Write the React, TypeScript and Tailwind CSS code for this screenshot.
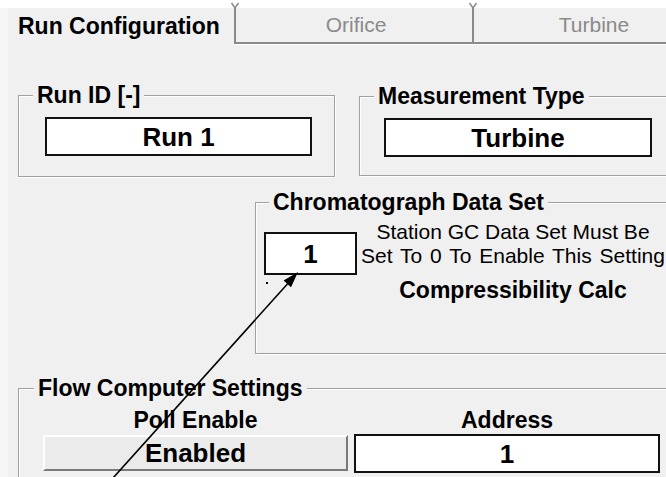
import React from "react";

const SANS = "font-['Liberation_Sans',Arial,sans-serif]";

// groupbox frame: grey line with a white highlight (etched look)
const GROUP =
  "border border-[#a0a0a0] shadow-[inset_1px_1px_0_#ffffff,1px_1px_0_#ffffff] box-border";
const LEGEND = "px-[4px] bg-[#f0f0f0] text-[23px] leading-[20px] font-bold text-black whitespace-nowrap";
const VALUE_BOX =
  "flex items-center justify-center bg-white border-2 border-[#111] text-[26px] font-bold leading-none text-black";

function TabEdge({ first = false }: { first?: boolean }) {
  return (
    <svg width="10" height="45" className="block shrink-0">
      <path d="M1.5 3 L5 8 L8.5 3" stroke="#8a8a8a" strokeWidth="1.5" fill="none" />
      <rect x="4" y="8" width="2" height="36" fill="#8a8a8a" />
      <rect x={first ? 5 : 0} y="42" width={first ? 5 : 10} height="2" fill="#8a8a8a" />
      <rect x={first ? 6 : 0} y="44" width={first ? 4 : 10} height="1" fill="#ffffff" />
    </svg>
  );
}

function InactiveTab({ label }: { label: string }) {
  return (
    <div className="flex flex-col h-[45px] w-[228px] shrink-0">
      <div className="flex-1 flex justify-center pt-[15px] pl-[4px] text-[21px] leading-[20px] text-[#8a8a8a]">
        {label}
      </div>
      <div className="h-[2px] bg-[#8a8a8a]" />
      <div className="h-[1px] bg-white" />
    </div>
  );
}

export default function App() {
  return (
    <div
      className={`${SANS} relative w-[666px] h-[477px] overflow-hidden flex bg-[linear-gradient(to_bottom,#ffffff_8px,#f6f6f6_8px)]`}
    >
      {/* tab control */}
      <div className="ml-[8px] flex-1 flex flex-col bg-[linear-gradient(to_bottom,#ffffff_8px,#f0f0f0_8px)]">
        {/* tab strip */}
        <div className="flex h-[45px] shrink-0">
          <div className="w-[222px] shrink-0 pt-[16px] pl-[10px] text-[23px] leading-[20px] font-bold whitespace-nowrap">
            Run Configuration
          </div>
          <TabEdge first />
          <InactiveTab label="Orifice" />
          <TabEdge />
          <InactiveTab label="Turbine" />
        </div>

        {/* page */}
        <div className="flex flex-col pl-[10px] pt-[40px]">
          {/* row 1 */}
          <div className="flex gap-[24px] items-start">
            <fieldset className={`${GROUP} w-[317px] h-[92px] shrink-0`}>
              <legend className={`${LEGEND} ml-[14px]`}>Run ID [-]</legend>
              <div className={`${VALUE_BOX} ml-[26px] mt-[12px] w-[267px] h-[39px]`}>Run 1</div>
            </fieldset>
            <fieldset className={`${GROUP} w-[340px] h-[90px] mt-[1px] shrink-0`}>
              <legend className={`${LEGEND} ml-[14px]`}>Measurement Type</legend>
              <div className={`${VALUE_BOX} ml-[24px] mt-[12px] w-[268px] h-[39px]`}>Turbine</div>
            </fieldset>
          </div>

          {/* row 2 */}
          <fieldset className={`${GROUP} ml-[237px] mt-[15px] w-[450px] h-[162px] shrink-0`}>
            <legend className={`${LEGEND} ml-[13px]`}>Chromatograph Data Set</legend>
            <div className="flex items-start">
              <div className="flex flex-col ml-[8px] mt-[20px]">
                <div className={`${VALUE_BOX} w-[93px] h-[43px]`}>1</div>
                <span className="block ml-[2px] mt-[7px] w-[2px] h-[2px] bg-black" />
              </div>
              <div className="flex flex-col items-center w-[306px] ml-[3px] mt-[8px] whitespace-nowrap">
                <span className="text-[21px] leading-[24px] text-black">Station GC Data Set Must Be</span>
                <span className="text-[21px] leading-[24px] text-black [word-spacing:2px]">
                  Set To 0 To Enable This Setting
                </span>
                <span className="mt-[10px] text-[23px] leading-[24px] font-bold text-black">
                  Compressibility Calc
                </span>
              </div>
            </div>
          </fieldset>

          {/* row 3 */}
          <fieldset className={`${GROUP} mt-[24px] w-[700px] h-[140px] shrink-0`}>
            <legend className={`${LEGEND} ml-[15px]`}>Flow Computer Settings</legend>
            <div className="flex gap-[6px] ml-[24px] mt-[12px]">
              <div className="flex flex-col items-center w-[305px]">
                <span className="text-[23px] leading-[20px] font-bold">Poll Enable</span>
                <button className="mt-[5px] w-full h-[36px] flex items-center justify-center bg-[#ebebeb] border-2 border-t-white border-l-white border-b-[#7a7a7a] border-r-[#7a7a7a] text-[26px] font-bold leading-none text-black">
                  Enabled
                </button>
              </div>
              <div className="flex flex-col items-center w-[306px]">
                <span className="text-[23px] leading-[20px] font-bold">Address</span>
                <div className={`${VALUE_BOX} mt-[4px] w-full h-[39px]`}>1</div>
              </div>
            </div>
          </fieldset>
        </div>
      </div>

      {/* annotation arrow drawn over the dialog */}
      <svg
        width="666"
        height="477"
        className="absolute inset-0 pointer-events-none"
      >
        <line x1="113" y1="478" x2="291" y2="280" stroke="#000" strokeWidth="1.6" />
        <polygon points="298,272 291,287.2 283.6,280.5" fill="#000" />
      </svg>
    </div>
  );
}
